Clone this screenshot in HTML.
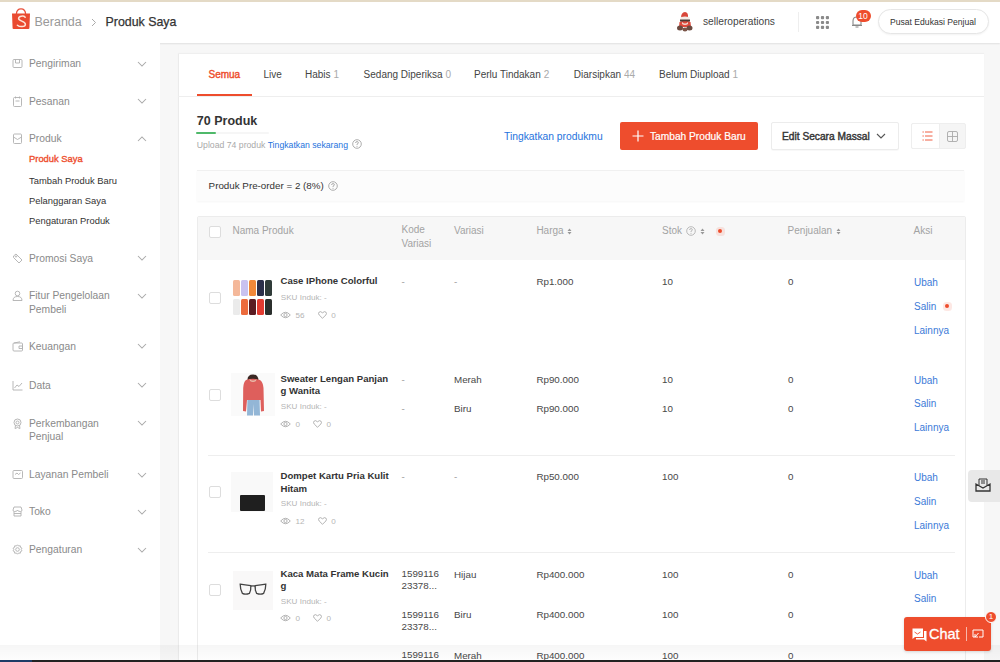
<!DOCTYPE html>
<html><head><meta charset="utf-8">
<style>
*{box-sizing:border-box;margin:0;padding:0}
html,body{width:1000px;height:662px;overflow:hidden}
body{position:relative;background:#f7f7f7;font-family:"Liberation Sans",sans-serif;color:#333;font-size:10px}
.a{position:absolute;white-space:nowrap}
#topline{left:0;top:0;width:1000px;height:2px;background:#e4dac6}
#header{left:0;top:2px;width:1000px;height:41px;background:#fff;box-shadow:0 1px 1.5px rgba(0,0,0,.09)}
#sidebar{left:0;top:43px;width:160px;height:619px;background:#fff}
#card{left:177.5px;top:54px;width:806.5px;height:620px;background:#fff;border-left:1px solid #ebebeb;box-shadow:0 -1px 1px rgba(0,0,0,.03)}
#bottombar{left:0;top:660px;width:1000px;height:2px;background:#222}
#bottomblue{left:0;top:660px;width:32px;height:2px;background:#1d3b66}
.side{left:29px;color:#8a8a8a;font-size:10.3px}
.sub{left:29px;color:#333;font-size:9.4px}
.chev{position:absolute;left:137px;width:10px;height:6px}
.ico{position:absolute;left:12px;width:11px;height:11px}
.tab{top:68px;font-size:10px;color:#444}
.tab b{font-weight:400;color:#aaa;margin-left:3px}
.th{color:#a3a3a3;font-size:10px}
.cell{font-size:9.8px;color:#484848}
.pn{font-size:9.6px;font-weight:700;color:#333;line-height:12.5px}
.sku{font-size:8.1px;color:#b5b5b5}
.act{font-size:10px;color:#3b7ad8}
.cb{position:absolute;width:12px;height:12px;border:1px solid #ddd;border-radius:2px;background:#fff}
.img{position:absolute;width:42px;height:41px;background:#f8f8f8}
</style></head>
<body>
<div class="a" id="topline"></div>
<div class="a" id="header"></div>
<div class="a" id="sidebar"></div>
<div class="a" id="card"></div>

<!-- header content -->
<svg class="a" style="left:11px;top:7px" width="20" height="23" viewBox="0 0 20 23">
  <path d="M5.4 7 C5.6 3.3 7.6 1.8 10 1.8 C12.4 1.8 14.4 3.3 14.6 7" fill="none" stroke="#e9503a" stroke-width="1.3"/>
  <path d="M1 6.6 H19 L18.4 21.2 Q18.3 22 17.4 22 H2.6 Q1.7 22 1.6 21.2 Z" fill="#ea4a30"/>
  <path d="M14.2 10.2 C12.8 8.6 7.6 8.6 7.6 11.6 C7.6 14.4 14.4 13.8 14.4 17.2 C14.4 20.2 8.6 20.2 6.4 18.2" fill="none" stroke="#fde4d8" stroke-width="1.5" stroke-linecap="round"/>
</svg>
<div class="a" style="left:34.5px;top:15px;font-size:12.5px;color:#999;line-height:15px">Beranda</div>
<svg class="a" style="left:91px;top:18px" width="6" height="9" viewBox="0 0 6 9"><path d="M1 1 L4.5 4.5 L1 8" fill="none" stroke="#aaa" stroke-width="1"/></svg>
<div class="a" style="left:105.5px;top:15px;font-size:12.4px;color:#333;line-height:15px;-webkit-text-stroke:0.25px #333">Produk Saya</div>

<svg class="a" style="left:676px;top:11px" width="18" height="21" viewBox="0 0 18 21">
  <path d="M5 7 Q5 1.5 9 1 Q12.5 1.2 12 6.5 Z" fill="#d9473a"/>
  <ellipse cx="9" cy="7" rx="4.8" ry="1.6" fill="#f3ece6"/>
  <path d="M4 8.5 H14 V10.5 Q9 12 4 10.5 Z" fill="#4a3a34"/>
  <path d="M3.5 11 Q9 9.5 14.5 11 L15 16 H3 Z" fill="#de4a3c"/>
  <path d="M6 11 Q9 14 12 11 L12 13 Q9 15 6 13 Z" fill="#f2d8d0"/>
  <ellipse cx="4" cy="17" rx="3" ry="2.5" fill="#6b4a40"/>
  <ellipse cx="13.5" cy="17" rx="3" ry="2.5" fill="#6b4a40"/>
  <ellipse cx="9" cy="18.5" rx="2.5" ry="2" fill="#7a5548"/>
</svg>
<div class="a" style="left:703px;top:15px;font-size:10.2px;color:#444;line-height:13px">selleroperations</div>
<div class="a" style="left:798px;top:12px;width:1px;height:20px;background:#eee"></div>
<svg class="a" style="left:816px;top:15.5px" width="13" height="13" viewBox="0 0 13 13" fill="#8a8a8a">
  <rect x="0" y="0" width="3.2" height="3.2" rx="1"/><rect x="4.9" y="0" width="3.2" height="3.2" rx="1"/><rect x="9.8" y="0" width="3.2" height="3.2" rx="1"/>
  <rect x="0" y="4.9" width="3.2" height="3.2" rx="1"/><rect x="4.9" y="4.9" width="3.2" height="3.2" rx="1"/><rect x="9.8" y="4.9" width="3.2" height="3.2" rx="1"/>
  <rect x="0" y="9.8" width="3.2" height="3.2" rx="1"/><rect x="4.9" y="9.8" width="3.2" height="3.2" rx="1"/><rect x="9.8" y="9.8" width="3.2" height="3.2" rx="1"/>
</svg>
<svg class="a" style="left:851px;top:15px" width="12" height="13" viewBox="0 0 12 13">
  <path d="M2 10 V6 Q2 2 6 2 Q10 2 10 6 V10 Z M1 10.5 H11 M4.5 12 H7.5" fill="none" stroke="#888" stroke-width="1.1"/>
</svg>
<div class="a" style="left:855.5px;top:10px;width:15px;height:12px;border-radius:6px;background:#ee4d2d;color:#fff;font-size:8.5px;line-height:12px;text-align:center">10</div>
<div class="a" style="left:877.5px;top:9.2px;width:111px;height:25px;border:1px solid #e6e6e6;border-radius:12.5px;background:#fff;box-shadow:0 1px 2px rgba(0,0,0,.05)"></div>
<div class="a" style="left:890px;top:16.8px;font-size:8.6px;color:#333;line-height:11px">Pusat Edukasi Penjual</div>

<!-- sidebar -->
<div class="a side" style="top:57.1px;line-height:13.5px">Pengiriman</div>
<svg class="ico" style="top:58.1px" viewBox="0 0 11 11" fill="none" stroke="#b0b0b0" stroke-width="0.9"><rect x="1" y="1.5" width="9" height="8" rx="1"/><path d="M3.5 1.5 V5 H7.5 V1.5"/></svg>
<svg class="chev" style="top:60.6px" viewBox="0 0 10 6"><path d="M1 1 L5 5 L9 1" fill="none" stroke="#a8a8a8" stroke-width="1.05"/></svg>
<div class="a side" style="top:94.5px;line-height:13.5px">Pesanan</div>
<svg class="ico" style="top:95.5px" viewBox="0 0 11 11" fill="none" stroke="#b0b0b0" stroke-width="0.9"><rect x="1.5" y="1.5" width="8" height="9" rx="1"/><path d="M3.5 0.5 V2.5 M7.5 0.5 V2.5 M3.5 5 H7.5"/></svg>
<svg class="chev" style="top:98.0px" viewBox="0 0 10 6"><path d="M1 1 L5 5 L9 1" fill="none" stroke="#a8a8a8" stroke-width="1.05"/></svg>
<div class="a side" style="top:132.3px;line-height:13.5px">Produk</div>
<svg class="ico" style="top:133.3px" viewBox="0 0 11 11" fill="none" stroke="#b0b0b0" stroke-width="0.9"><rect x="1.5" y="1" width="8" height="9.5" rx="1"/><path d="M1.5 4 L5.5 6.5 L9.5 4"/></svg>
<svg class="chev" style="top:135.8px" viewBox="0 0 10 6"><path d="M1 5 L5 1 L9 5" fill="none" stroke="#a8a8a8" stroke-width="1.05"/></svg>
<div class="a side" style="top:251.5px;line-height:13.5px">Promosi Saya</div>
<svg class="ico" style="top:252.5px" viewBox="0 0 11 11" fill="none" stroke="#b0b0b0" stroke-width="0.9"><path d="M1.5 3 L4 1 L10 7 L7 10 L1.5 4.5 Z"/><circle cx="4" cy="3.5" r=".7"/></svg>
<svg class="chev" style="top:255.0px" viewBox="0 0 10 6"><path d="M1 1 L5 5 L9 1" fill="none" stroke="#a8a8a8" stroke-width="1.05"/></svg>
<div class="a side" style="top:289.1px;line-height:13.5px">Fitur Pengelolaan<br>Pembeli</div>
<svg class="ico" style="top:290.1px" viewBox="0 0 11 11" fill="none" stroke="#b0b0b0" stroke-width="0.9"><circle cx="5.5" cy="3.5" r="2.3"/><path d="M1 10.5 Q1 6.5 5.5 6.5 Q10 6.5 10 10.5 Z"/></svg>
<svg class="chev" style="top:292.6px" viewBox="0 0 10 6"><path d="M1 1 L5 5 L9 1" fill="none" stroke="#a8a8a8" stroke-width="1.05"/></svg>
<div class="a side" style="top:339.8px;line-height:13.5px">Keuangan</div>
<svg class="ico" style="top:340.8px" viewBox="0 0 11 11" fill="none" stroke="#b0b0b0" stroke-width="0.9"><rect x="1" y="2" width="9.5" height="8" rx="1"/><path d="M7 5 H10.5 V7.5 H7 Z M2 2 L8 0.8"/></svg>
<svg class="chev" style="top:343.3px" viewBox="0 0 10 6"><path d="M1 1 L5 5 L9 1" fill="none" stroke="#a8a8a8" stroke-width="1.05"/></svg>
<div class="a side" style="top:378.5px;line-height:13.5px">Data</div>
<svg class="ico" style="top:379.5px" viewBox="0 0 11 11" fill="none" stroke="#b0b0b0" stroke-width="0.9"><path d="M1 1 V10 H10.5 M2.5 8 L5 5 L7 6.5 L10 3"/></svg>
<svg class="chev" style="top:382.0px" viewBox="0 0 10 6"><path d="M1 1 L5 5 L9 1" fill="none" stroke="#a8a8a8" stroke-width="1.05"/></svg>
<div class="a side" style="top:416.5px;line-height:13.5px">Perkembangan<br>Penjual</div>
<svg class="ico" style="top:417.5px" viewBox="0 0 11 11" fill="none" stroke="#b0b0b0" stroke-width="0.9"><circle cx="5.5" cy="4.5" r="3.5"/><circle cx="5.5" cy="4.5" r="1.5"/><path d="M3.5 7.5 L3 10.5 L5.5 9.5 L8 10.5 L7.5 7.5"/></svg>
<svg class="chev" style="top:420.0px" viewBox="0 0 10 6"><path d="M1 1 L5 5 L9 1" fill="none" stroke="#a8a8a8" stroke-width="1.05"/></svg>
<div class="a side" style="top:468.0px;line-height:13.5px">Layanan Pembeli</div>
<svg class="ico" style="top:469.0px" viewBox="0 0 11 11" fill="none" stroke="#b0b0b0" stroke-width="0.9"><rect x="1" y="1.5" width="9.5" height="8" rx="1"/><path d="M3 5.5 L5 4 L6.5 5.5 L8.5 4"/></svg>
<svg class="chev" style="top:471.5px" viewBox="0 0 10 6"><path d="M1 1 L5 5 L9 1" fill="none" stroke="#a8a8a8" stroke-width="1.05"/></svg>
<div class="a side" style="top:505.2px;line-height:13.5px">Toko</div>
<svg class="ico" style="top:506.2px" viewBox="0 0 11 11" fill="none" stroke="#b0b0b0" stroke-width="0.9"><path d="M1 4 L2 1 H9 L10 4 Q10 5.5 8.5 5.5 Q5.5 5.5 5.5 4 Q5.5 5.5 2.5 5.5 Q1 5.5 1 4 Z M2 5.5 V10 H9 V5.5 M2 7.5 H9"/></svg>
<svg class="chev" style="top:508.7px" viewBox="0 0 10 6"><path d="M1 1 L5 5 L9 1" fill="none" stroke="#a8a8a8" stroke-width="1.05"/></svg>
<div class="a side" style="top:543.2px;line-height:13.5px">Pengaturan</div>
<svg class="ico" style="top:544.2px" viewBox="0 0 11 11" fill="none" stroke="#b0b0b0" stroke-width="0.9"><circle cx="5.5" cy="5.5" r="1.8"/><path d="M5.5 0.8 L6.6 2 L8.3 1.8 L8.5 3.4 L10 4.2 L9.2 5.5 L10 6.8 L8.5 7.6 L8.3 9.2 L6.6 9 L5.5 10.2 L4.4 9 L2.7 9.2 L2.5 7.6 L1 6.8 L1.8 5.5 L1 4.2 L2.5 3.4 L2.7 1.8 L4.4 2 Z"/></svg>
<svg class="chev" style="top:546.7px" viewBox="0 0 10 6"><path d="M1 1 L5 5 L9 1" fill="none" stroke="#a8a8a8" stroke-width="1.05"/></svg>
<div class="a sub" style="top:151.5px;line-height:13px;color:#ee4d2d;font-weight:400;-webkit-text-stroke:0.35px #ee4d2d">Produk Saya</div>
<div class="a sub" style="top:173.5px;line-height:13px;color:#333;font-weight:400">Tambah Produk Baru</div>
<div class="a sub" style="top:193.5px;line-height:13px;color:#333;font-weight:400">Pelanggaran Saya</div>
<div class="a sub" style="top:213.5px;line-height:13px;color:#333;font-weight:400">Pengaturan Produk</div>

<!-- tabs -->
<div class="a" style="left:208.5px;top:67.5px;line-height:13px;font-size:10px;font-weight:400;color:#ee4d2d;-webkit-text-stroke:0.4px #ee4d2d">Semua</div>
<div class="a" style="left:263.4px;top:67.5px;line-height:13px;font-size:10px;color:#444">Live</div>
<div class="a" style="left:305px;top:67.5px;line-height:13px;font-size:10px;color:#444">Habis<span style="color:#aaa;margin-left:3px">1</span></div>
<div class="a" style="left:363.6px;top:67.5px;line-height:13px;font-size:10px;color:#444">Sedang Diperiksa<span style="color:#aaa;margin-left:3px">0</span></div>
<div class="a" style="left:474px;top:67.5px;line-height:13px;font-size:10px;color:#444">Perlu Tindakan<span style="color:#aaa;margin-left:3px">2</span></div>
<div class="a" style="left:573.8px;top:67.5px;line-height:13px;font-size:10px;color:#444">Diarsipkan<span style="color:#aaa;margin-left:3px">44</span></div>
<div class="a" style="left:659px;top:67.5px;line-height:13px;font-size:10px;color:#444">Belum Diupload<span style="color:#aaa;margin-left:3px">1</span></div>
<div class="a" style="left:178px;top:95.5px;width:806px;height:1px;background:#eee"></div>
<div class="a" style="left:196.5px;top:94px;width:55.5px;height:2px;background:#ee4d2d"></div>

<div class="a" style="left:196.8px;top:114.2px;font-size:12.5px;font-weight:700;color:#333;line-height:15px">70 Produk</div>
<div class="a" style="left:196.3px;top:131.8px;width:73px;height:2.3px;background:#f6f6f6;border-radius:1px"></div>
<div class="a" style="left:196.3px;top:131.8px;width:19.5px;height:2.3px;background:#4fb96a;border-radius:1px"></div>
<div class="a" style="left:196.8px;top:139.8px;font-size:8.7px;color:#aaa;line-height:11px">Upload 74 produk <span style="color:#2673dd">Tingkatkan sekarang</span></div>
<svg class="a" style="left:351.5px;top:139px" width="10" height="10" viewBox="0 0 10 10"><circle cx="5" cy="5" r="4.3" fill="none" stroke="#999" stroke-width=".8"/><path d="M3.6 4 Q3.6 2.6 5 2.6 Q6.4 2.6 6.4 3.8 Q6.4 4.6 5 5.2 V6" fill="none" stroke="#999" stroke-width=".8"/><circle cx="5" cy="7.3" r=".5" fill="#999"/></svg>

<div class="a" style="left:504px;top:129.5px;font-size:10.3px;color:#2673dd;line-height:13px">Tingkatkan produkmu</div>
<div class="a" style="left:620px;top:122px;width:138px;height:28px;background:#ee4d2d;border-radius:2px"></div>
<svg class="a" style="left:632px;top:130px" width="12" height="12" viewBox="0 0 12 12"><path d="M6 0.5 V11.5 M0.5 6 H11.5" stroke="#fff" stroke-width="1.2"/></svg>
<div class="a" style="left:650px;top:129.5px;font-size:10.2px;color:#fff;line-height:13px;-webkit-text-stroke:0.2px #fff">Tambah Produk Baru</div>
<div class="a" style="left:770.5px;top:121.8px;width:128px;height:28px;background:#fff;border:1px solid #ececec;border-radius:2px;box-shadow:0 1px 1px rgba(0,0,0,.03)"></div>
<div class="a" style="left:782px;top:129.5px;font-size:10.2px;color:#333;line-height:13px;-webkit-text-stroke:0.4px #333">Edit Secara Massal</div>
<svg class="a" style="left:876px;top:133px" width="10" height="6" viewBox="0 0 10 6"><path d="M1 1 L5 5 L9 1" fill="none" stroke="#555" stroke-width="1.1"/></svg>
<div class="a" style="left:911px;top:122.5px;width:54.5px;height:26.5px;border:1px solid #eee;border-radius:2px;background:#f5f5f5"></div>
<div class="a" style="left:911px;top:122.5px;width:28.5px;height:26.5px;border:1px solid #eee;border-radius:2px 0 0 2px;background:#fff"></div>
<svg class="a" style="left:922px;top:131px" width="11" height="10" viewBox="0 0 11 10" stroke="#ee4d2d" stroke-width=".9"><path d="M0.5 1 H1.8 M3 1 H10.5 M0.5 5 H1.8 M3 5 H10.5 M0.5 9 H1.8 M3 9 H10.5"/></svg>
<svg class="a" style="left:946.5px;top:130.5px" width="11" height="11" viewBox="0 0 11 11" fill="none" stroke="#aaa" stroke-width=".9"><rect x=".5" y=".5" width="10" height="10" rx="1.5"/><path d="M5.5 .5 V10.5 M.5 5.5 H10.5"/></svg>

<div class="a" style="left:197px;top:169.5px;width:767px;height:31px;background:#fcfcfc;box-shadow:0 1px 2px rgba(0,0,0,.04);border-top:1px solid #f0f0f0"></div>
<div class="a" style="left:208.6px;top:178.5px;font-size:9.8px;color:#333;line-height:13px">Produk Pre-order = 2 (8%)</div>
<svg class="a" style="left:327.5px;top:180.5px" width="10" height="10" viewBox="0 0 10 10"><circle cx="5" cy="5" r="4.3" fill="none" stroke="#999" stroke-width=".8"/><path d="M3.6 4 Q3.6 2.6 5 2.6 Q6.4 2.6 6.4 3.8 Q6.4 4.6 5 5.2 V6" fill="none" stroke="#999" stroke-width=".8"/><circle cx="5" cy="7.3" r=".5" fill="#999"/></svg>

<!-- table -->
<div class="a" style="left:197px;top:215.5px;width:769px;height:460px;border:1px solid #ececec;border-radius:2px;background:#fff"></div>
<div class="a" style="left:198px;top:216.5px;width:767px;height:43px;background:#f7f7f7"></div>
<div class="cb" style="left:209px;top:225.5px;background:#fff"></div>
<div class="a th" style="left:232.5px;top:223.5px;line-height:13px">Nama Produk</div>
<div class="a th" style="left:401.5px;top:223.25px;line-height:13.5px;white-space:normal;width:40px">Kode<br>Variasi</div>
<div class="a th" style="left:454px;top:223.5px;line-height:13px">Variasi</div>
<div class="a th" style="left:536.4px;top:223.5px;line-height:13px">Harga</div>
<svg class="a" style="left:567px;top:228px" width="5" height="7" viewBox="0 0 5 7" fill="#999"><path d="M0.5 3 L2.5 0.5 L4.5 3 Z M0.5 4 L2.5 6.5 L4.5 4 Z"/></svg>
<div class="a th" style="left:662px;top:223.5px;line-height:13px">Stok</div>
<svg class="a" style="left:686px;top:225.8px" width="10" height="10" viewBox="0 0 10 10"><circle cx="5" cy="5" r="4.3" fill="none" stroke="#aaa" stroke-width=".8"/><path d="M3.6 4 Q3.6 2.6 5 2.6 Q6.4 2.6 6.4 3.8 Q6.4 4.6 5 5.2 V6" fill="none" stroke="#aaa" stroke-width=".8"/><circle cx="5" cy="7.3" r=".5" fill="#aaa"/></svg>
<svg class="a" style="left:700px;top:228px" width="5" height="7" viewBox="0 0 5 7" fill="#999"><path d="M0.5 3 L2.5 0.5 L4.5 3 Z M0.5 4 L2.5 6.5 L4.5 4 Z"/></svg>
<div class="a th" style="left:787.6px;top:223.5px;line-height:13px">Penjualan</div>
<svg class="a" style="left:835.5px;top:228px" width="5" height="7" viewBox="0 0 5 7" fill="#999"><path d="M0.5 3 L2.5 0.5 L4.5 3 Z M0.5 4 L2.5 6.5 L4.5 4 Z"/></svg>
<div class="a th" style="left:913.6px;top:223.5px;line-height:13px">Aksi</div>
<div class="a" style="left:715.5px;top:226.5px;width:9px;height:9px;border-radius:3.5px;background:rgba(238,77,45,.13)"></div><div class="a" style="left:718px;top:229px;width:4px;height:4px;border-radius:50%;background:#ee4d2d"></div>
<div class="cb" style="left:209px;top:292px"></div>
<div class="img" style="left:231px;top:276px;width:43px;height:41px;background:#fff"></div>
<div class="a" style="left:233px;top:280.3px;width:7px;height:16px;border-radius:1.5px;background:#f4b89a"></div>
<div class="a" style="left:241px;top:280.3px;width:7px;height:16px;border-radius:1.5px;background:#c9c2f0"></div>
<div class="a" style="left:249px;top:280.3px;width:7px;height:16px;border-radius:1.5px;background:#f0883a"></div>
<div class="a" style="left:257px;top:280.3px;width:7px;height:16px;border-radius:1.5px;background:#2b2f4a"></div>
<div class="a" style="left:265px;top:280.3px;width:7px;height:16px;border-radius:1.5px;background:#2f3b39"></div>
<div class="a" style="left:233px;top:299.2px;width:7px;height:15.5px;border-radius:1.5px;background:#ebebeb"></div>
<div class="a" style="left:241px;top:299.2px;width:7px;height:15.5px;border-radius:1.5px;background:#ec6b3d"></div>
<div class="a" style="left:249px;top:299.2px;width:7px;height:15.5px;border-radius:1.5px;background:#5b1c22"></div>
<div class="a" style="left:257px;top:299.2px;width:7px;height:15.5px;border-radius:1.5px;background:#e23b31"></div>
<div class="a" style="left:265px;top:299.2px;width:7px;height:15.5px;border-radius:1.5px;background:#2b2f2d"></div>
<div class="a pn" style="left:280.5px;top:275.35px;white-space:normal;width:112px">Case IPhone Colorful</div>
<div class="a sku" style="left:280.8px;top:292.0px;line-height:11px">SKU Induk: -</div>
<svg class="a" style="left:280px;top:311px" width="11" height="8" viewBox="0 0 11 8" fill="none" stroke="#aaa" stroke-width=".9"><path d="M0.7 4 Q5.5 -1.5 10.3 4 Q5.5 9.5 0.7 4 Z"/><circle cx="5.5" cy="4" r="1.6"/></svg>
<div class="a sku" style="left:295.6px;top:309.5px;line-height:11px">56</div>
<svg class="a" style="left:318px;top:310.8px" width="9" height="8" viewBox="0 0 9 8" fill="none" stroke="#aaa" stroke-width=".9"><path d="M4.5 7.3 L1.2 4 Q0 2.6 0.9 1.3 Q2.5 -0.3 4.5 1.8 Q6.5 -0.3 8.1 1.3 Q9 2.6 7.8 4 Z"/></svg>
<div class="a sku" style="left:331.3px;top:309.5px;line-height:11px">0</div>
<div class="a cell" style="left:401.5px;top:274.5px;line-height:13px;color:#999">-</div>
<div class="a cell" style="left:454px;top:274.5px;line-height:13px;color:#999">-</div>
<div class="a cell" style="left:536.4px;top:275.1px;line-height:13px;">Rp1.000</div>
<div class="a cell" style="left:662px;top:275.1px;line-height:13px;">10</div>
<div class="a cell" style="left:788px;top:275.1px;line-height:13px;">0</div>
<div class="a act" style="left:914px;top:276.3px;line-height:13px">Ubah</div>
<div class="a act" style="left:914px;top:299.8px;line-height:13px">Salin</div>
<div class="a act" style="left:914px;top:323.8px;line-height:13px">Lainnya</div>
<div class="a" style="left:942.5px;top:301.5px;width:9px;height:9px;border-radius:3.5px;background:rgba(238,77,45,.13)"></div><div class="a" style="left:945px;top:304px;width:4px;height:4px;border-radius:50%;background:#ee4d2d"></div>
<div class="cb" style="left:209px;top:389px"></div>
<div class="img" style="left:231px;top:373px;width:44px;height:43px;background:#fafafa"></div>
<svg class="a" style="left:232px;top:374px" width="42" height="42" viewBox="0 0 42 42">
<path d="M15.5 7 Q15 0.5 21 0.5 Q26.5 0.5 26.5 7 Z" fill="#3a2824"/>
<path d="M15 41.5 L15.5 24 L27.5 24 L28 41.5 L22 41.5 L21.5 30 L21 41.5 Z" fill="#93b6d6"/>
<path d="M14 6 Q21 3.5 28 6 Q31 8 31.5 14 L32 37 L29 37.5 L28.5 26 L15 26 L14 37.5 L11 37 L11.2 14 Q11.5 8 14 6 Z" fill="#de5f5c"/>
<path d="M17.5 5 Q21 8 24.5 5 L24 7 Q21 9 18 7 Z" fill="#e8b8a8"/>
</svg>
<div class="a pn" style="left:280.5px;top:372.75px;white-space:normal;width:112px">Sweater Lengan Panjan<br>g Wanita</div>
<div class="a sku" style="left:280.8px;top:401.1px;line-height:11px">SKU Induk: -</div>
<svg class="a" style="left:280px;top:420px" width="11" height="8" viewBox="0 0 11 8" fill="none" stroke="#aaa" stroke-width=".9"><path d="M0.7 4 Q5.5 -1.5 10.3 4 Q5.5 9.5 0.7 4 Z"/><circle cx="5.5" cy="4" r="1.6"/></svg>
<div class="a sku" style="left:295.6px;top:418.5px;line-height:11px">0</div>
<svg class="a" style="left:313px;top:419.8px" width="9" height="8" viewBox="0 0 9 8" fill="none" stroke="#aaa" stroke-width=".9"><path d="M4.5 7.3 L1.2 4 Q0 2.6 0.9 1.3 Q2.5 -0.3 4.5 1.8 Q6.5 -0.3 8.1 1.3 Q9 2.6 7.8 4 Z"/></svg>
<div class="a sku" style="left:326.5px;top:418.5px;line-height:11px">0</div>
<div class="a cell" style="left:401.5px;top:372.5px;line-height:13px;color:#999">-</div>
<div class="a cell" style="left:401.5px;top:402.2px;line-height:13px;color:#999">-</div>
<div class="a cell" style="left:454px;top:372.5px;line-height:13px;">Merah</div>
<div class="a cell" style="left:454px;top:402.2px;line-height:13px;">Biru</div>
<div class="a cell" style="left:536.4px;top:372.5px;line-height:13px;">Rp90.000</div>
<div class="a cell" style="left:536.4px;top:402.2px;line-height:13px;">Rp90.000</div>
<div class="a cell" style="left:662px;top:372.5px;line-height:13px;">10</div>
<div class="a cell" style="left:662px;top:402.2px;line-height:13px;">10</div>
<div class="a cell" style="left:788px;top:372.5px;line-height:13px;">0</div>
<div class="a cell" style="left:788px;top:402.2px;line-height:13px;">0</div>
<div class="a act" style="left:914px;top:373.5px;line-height:13px">Ubah</div>
<div class="a act" style="left:914px;top:397.0px;line-height:13px">Salin</div>
<div class="a act" style="left:914px;top:421.0px;line-height:13px">Lainnya</div>
<div class="a" style="left:208px;top:455px;width:747px;height:1px;background:#eee"></div>
<div class="cb" style="left:209px;top:486px"></div>
<div class="img" style="left:231px;top:471.5px;width:42px;height:40px;background:#f9f9f9"></div>
<div class="a" style="left:240px;top:494.7px;width:25.4px;height:16.3px;background:#1f1f1f;border-radius:1px"></div>
<div class="a pn" style="left:280.5px;top:470.25px;white-space:normal;width:112px">Dompet Kartu Pria Kulit<br>Hitam</div>
<div class="a sku" style="left:280.8px;top:498.3px;line-height:11px">SKU Induk: -</div>
<svg class="a" style="left:280px;top:517px" width="11" height="8" viewBox="0 0 11 8" fill="none" stroke="#aaa" stroke-width=".9"><path d="M0.7 4 Q5.5 -1.5 10.3 4 Q5.5 9.5 0.7 4 Z"/><circle cx="5.5" cy="4" r="1.6"/></svg>
<div class="a sku" style="left:295.6px;top:515.5px;line-height:11px">12</div>
<svg class="a" style="left:318px;top:516.8px" width="9" height="8" viewBox="0 0 9 8" fill="none" stroke="#aaa" stroke-width=".9"><path d="M4.5 7.3 L1.2 4 Q0 2.6 0.9 1.3 Q2.5 -0.3 4.5 1.8 Q6.5 -0.3 8.1 1.3 Q9 2.6 7.8 4 Z"/></svg>
<div class="a sku" style="left:331.3px;top:515.5px;line-height:11px">0</div>
<div class="a cell" style="left:401.5px;top:470.0px;line-height:13px;color:#999">-</div>
<div class="a cell" style="left:454px;top:470.0px;line-height:13px;color:#999">-</div>
<div class="a cell" style="left:536.4px;top:470.0px;line-height:13px;">Rp50.000</div>
<div class="a cell" style="left:662px;top:470.0px;line-height:13px;">100</div>
<div class="a cell" style="left:788px;top:470.0px;line-height:13px;">0</div>
<div class="a act" style="left:914px;top:471.0px;line-height:13px">Ubah</div>
<div class="a act" style="left:914px;top:494.5px;line-height:13px">Salin</div>
<div class="a act" style="left:914px;top:518.5px;line-height:13px">Lainnya</div>
<div class="a" style="left:208px;top:552px;width:747px;height:1px;background:#eee"></div>
<div class="cb" style="left:209px;top:583.5px"></div>
<div class="img" style="left:233px;top:571px;width:40px;height:39px;background:#f9f8f8"></div>
<svg class="a" style="left:239px;top:583px" width="28" height="13" viewBox="0 0 28 13" fill="none" stroke="#444" stroke-width="1.3"><path d="M1.2 1.2 Q6 2 11.8 2.6 Q12.2 7.5 10.4 10.4 Q6.5 12 3.4 10.4 Q1.2 6.5 1.2 1.2 Z"/><path d="M26.8 1.2 Q22 2 16.2 2.6 Q15.8 7.5 17.6 10.4 Q21.5 12 24.6 10.4 Q26.8 6.5 26.8 1.2 Z"/><path d="M11.8 3.2 Q14 2.4 16.2 3.2"/></svg>
<div class="a pn" style="left:280.5px;top:567.75px;white-space:normal;width:112px">Kaca Mata Frame Kucin<br>g</div>
<div class="a sku" style="left:280.8px;top:595.5px;line-height:11px">SKU Induk: -</div>
<svg class="a" style="left:280px;top:614px" width="11" height="8" viewBox="0 0 11 8" fill="none" stroke="#aaa" stroke-width=".9"><path d="M0.7 4 Q5.5 -1.5 10.3 4 Q5.5 9.5 0.7 4 Z"/><circle cx="5.5" cy="4" r="1.6"/></svg>
<div class="a sku" style="left:295.6px;top:612.5px;line-height:11px">0</div>
<svg class="a" style="left:313px;top:613.8px" width="9" height="8" viewBox="0 0 9 8" fill="none" stroke="#aaa" stroke-width=".9"><path d="M4.5 7.3 L1.2 4 Q0 2.6 0.9 1.3 Q2.5 -0.3 4.5 1.8 Q6.5 -0.3 8.1 1.3 Q9 2.6 7.8 4 Z"/></svg>
<div class="a sku" style="left:326.5px;top:612.5px;line-height:11px">0</div>
<div class="a cell" style="left:401.5px;top:567.5px;line-height:12px">1599116<br>23378...</div>
<div class="a cell" style="left:401.5px;top:608.5px;line-height:12px">1599116<br>23378...</div>
<div class="a cell" style="left:401.5px;top:649px;line-height:12px">1599116</div>
<div class="a cell" style="left:454px;top:567.5px;line-height:13px;">Hijau</div>
<div class="a cell" style="left:454px;top:608.1px;line-height:13px;">Biru</div>
<div class="a cell" style="left:454px;top:649.0px;line-height:13px;">Merah</div>
<div class="a cell" style="left:536.4px;top:567.5px;line-height:13px;">Rp400.000</div>
<div class="a cell" style="left:536.4px;top:608.1px;line-height:13px;">Rp400.000</div>
<div class="a cell" style="left:536.4px;top:649.0px;line-height:13px;">Rp400.000</div>
<div class="a cell" style="left:662px;top:567.5px;line-height:13px;">100</div>
<div class="a cell" style="left:662px;top:608.1px;line-height:13px;">100</div>
<div class="a cell" style="left:662px;top:649.0px;line-height:13px;">100</div>
<div class="a cell" style="left:788px;top:567.5px;line-height:13px;">0</div>
<div class="a cell" style="left:788px;top:608.1px;line-height:13px;">0</div>
<div class="a cell" style="left:788px;top:649.0px;line-height:13px;">0</div>
<div class="a act" style="left:914px;top:568.5px;line-height:13px">Ubah</div>
<div class="a act" style="left:914px;top:592.0px;line-height:13px">Salin</div>
<div class="a" style="left:0;top:645px;width:1000px;height:15px;background:linear-gradient(rgba(0,0,0,.035),rgba(0,0,0,.008))"></div>
<div class="a" style="left:968px;top:470px;width:32px;height:32px;background:#e8e8e8;border-radius:4px 0 0 4px"></div>
<svg class="a" style="left:975px;top:477px" width="16" height="16" viewBox="0 0 16 16" fill="none" stroke="#333" stroke-width="1.3"><path d="M1 7 V14 H15 V7 L8 11 Z"/><path d="M4 8.5 V2 H12 V8.5 M6 4 H10 M6 6 H10" stroke-width="1"/></svg>
<div class="a" style="left:904px;top:617px;width:87px;height:34px;background:#ee4d2d;border-radius:3px;box-shadow:0 1px 3px rgba(0,0,0,.15)"></div>
<svg class="a" style="left:912px;top:628px" width="15" height="14" viewBox="0 0 15 14"><path d="M0.5 0.5 H11 V9 H3 L0.5 11 Z" fill="#fff"/><path d="M12 3 H14.5 V13.5 L12 11.5 H4 V10 H12 Z" fill="#fff"/><path d="M2.5 4 L5.5 6 L8.5 4" stroke="#ee4d2d" stroke-width=".9" fill="none"/></svg>
<div class="a" style="left:929px;top:626px;font-size:14.5px;color:#fff;line-height:17px;-webkit-text-stroke:0.3px #fff">Chat</div>
<div class="a" style="left:966px;top:627px;width:1px;height:14px;background:rgba(255,255,255,.6)"></div>
<svg class="a" style="left:972px;top:629px" width="12" height="11" viewBox="0 0 12 11" fill="none" stroke="#fff" stroke-width="1"><path d="M1 1 H11 V8 H7 M1 1 V8 H3"/><path d="M6.5 4 L3 8 M3 5 V8 H6"/></svg>
<div class="a" style="left:985px;top:611px;width:12px;height:12px;border-radius:50%;background:#ee4d2d;border:1px solid #fff;color:#fff;font-size:8px;line-height:10px;text-align:center">1</div>
<div class="a" id="bottombar"></div>
<div class="a" id="bottomblue"></div>
</body></html>
